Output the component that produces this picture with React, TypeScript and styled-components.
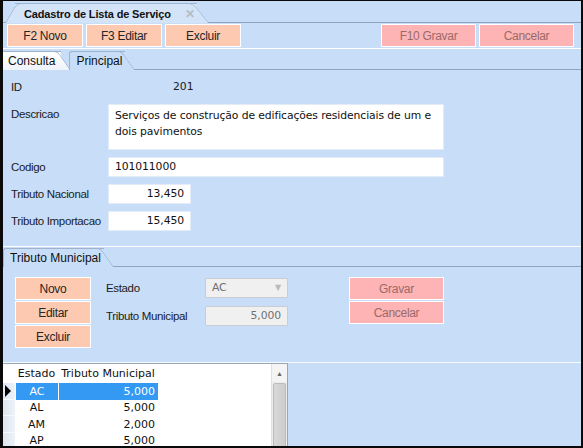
import React from 'react'
import styled, { createGlobalStyle } from 'styled-components'

const GlobalStyle = createGlobalStyle`
  html, body {
    margin: 0;
    padding: 0;
    background: #000;
  }
  * {
    box-sizing: border-box;
  }
`

const Window = styled.div`
  width: 583px;
  height: 448px;
  border-style: solid;
  border-color: #0a0a0a;
  border-width: 1px 2px 2px 3px;
  background: #c7ddf8;
  font-family: 'Liberation Sans', Arial, sans-serif;
  font-size: 12px;
  color: #1b1b1b;
  display: flex;
  flex-direction: column;
  overflow: hidden;
`

const DocStrip = styled.div`
  height: 22px;
  flex-shrink: 0;
  display: flex;
  align-items: flex-end;
  padding-left: 12px;
  border-bottom: 1px solid #8fa3bd;
`

const DocTab = styled.div`
  position: relative;
  height: 20px;
  padding: 0 2px 0 9px;
  display: flex;
  align-items: center;
  gap: 14px;
  background: #d3e3f8;
  border-top: 1px solid #9fb2cb;
  margin-bottom: -1px;
  font-weight: bold;
  font-size: 11px;
  letter-spacing: -0.15px;
  color: #111;

  &::before,
  &::after {
    content: '';
    position: absolute;
    top: -1px;
    bottom: 0;
    width: 14px;
    background: #d3e3f8;
    border-top: 1px solid #9fb2cb;
  }
  &::before {
    left: -10px;
    border-left: 1px solid #9fb2cb;
    border-top-left-radius: 6px;
    transform: skewX(-30deg);
    transform-origin: bottom left;
  }
  &::after {
    right: -12px;
    border-right: 1px solid #9fb2cb;
    border-top-right-radius: 6px;
    transform: skewX(38deg);
    transform-origin: bottom right;
  }
`

const DocTabText = styled.span`
  position: relative;
  z-index: 1;
`

const CloseMark = styled.span`
  position: relative;
  z-index: 1;
  color: #b4bcc8;
  font-size: 12px;
  font-weight: bold;
`

const Toolbar = styled.div`
  height: 26px;
  flex-shrink: 0;
  display: flex;
  align-items: center;
  padding: 0 7px 0 4px;
  gap: 3px;
  border-bottom: 1px solid #ffffff;
`

const Spacer = styled.div`
  flex: 1;
`

const ActionButton = styled.div<{ $tone?: 'peach' | 'pink'; $w: number; $h?: number }>`
  width: ${p => p.$w}px;
  height: ${p => p.$h ?? 23}px;
  display: flex;
  align-items: center;
  justify-content: center;
  border: 1px solid #ffffff;
  background: ${p => (p.$tone === 'pink' ? '#feb4b4' : '#fdcab1')};
  color: ${p => (p.$tone === 'pink' ? '#9a6a6a' : '#262626')};
  font-size: 12px;
  letter-spacing: -0.3px;
`

const TabRow = styled.div`
  height: 21px;
  flex-shrink: 0;
  display: flex;
  align-items: flex-end;
  gap: 8px;
  border-bottom: 1px solid #8fa3bd;
`

const PageTab = styled.div<{ $active?: boolean }>`
  position: relative;
  height: 19px;
  padding: 0 ${p => (p.$active ? 6 : 3)}px 0 ${p => (p.$active ? 5 : 6)}px;
  display: flex;
  align-items: center;
  margin-bottom: -1px;
  font-size: 12px;
  color: #111;
  background: ${p => (p.$active ? 'linear-gradient(#ffffff, #eef3fa)' : '#c7ddf8')};
  border-top: 1px solid #9fb2cb;
  border-left: ${p => (p.$active ? 'none' : '1px solid #9fb2cb')};
  ${p => (p.$active ? '' : 'border-top-left-radius: 3px;')}

  &::after {
    content: '';
    position: absolute;
    top: -1px;
    bottom: 0;
    right: -10px;
    width: 14px;
    background: inherit;
    border-top: 1px solid #9fb2cb;
    border-right: 1px solid #9fb2cb;
    border-top-right-radius: 4px;
    transform: skewX(35deg);
    transform-origin: bottom right;
  }
`

const TabLabel = styled.span`
  position: relative;
  z-index: 1;
`

const Form = styled.div`
  height: 177px;
  flex-shrink: 0;
  display: grid;
  grid-template-columns: 97px 1fr;
  grid-auto-rows: min-content;
  row-gap: 7px;
  padding: 7px 0 0 8px;
  border-bottom: 1px solid #ffffff;
`

const Label = styled.div<{ $top?: boolean }>`
  display: flex;
  align-items: ${p => (p.$top ? 'flex-start' : 'center')};
  padding-top: ${p => (p.$top ? 4 : 0)}px;
  min-height: 20px;
  font-size: 11.5px;
  letter-spacing: -0.35px;
`

const Plain = styled.div`
  height: 18px;
  display: flex;
  align-items: center;
  padding-left: 65px;
  font-family: 'DejaVu Sans', sans-serif;
  font-size: 10.8px;
`

const Field = styled.div<{ $w: number; $h?: number; $right?: boolean; $disabled?: boolean }>`
  width: ${p => p.$w}px;
  height: ${p => p.$h ?? 20}px;
  background: ${p => (p.$disabled ? '#f0f0f0' : '#ffffff')};
  border: 1px solid ${p => (p.$disabled ? '#c9cdd3' : '#e3ecf7')};
  border-radius: 1px;
  display: flex;
  align-items: ${p => (p.$h ? 'flex-start' : 'center')};
  justify-content: ${p => (p.$right ? 'flex-end' : 'flex-start')};
  padding: ${p => (p.$h ? '3px 6px' : '0 6px')};
  font-family: 'DejaVu Sans', sans-serif;
  font-size: 10.8px;
  letter-spacing: -0.1px;
  line-height: 16px;
  color: ${p => (p.$disabled ? '#707070' : '#111')};
`

const SectionHeader = styled.div`
  height: 20px;
  flex-shrink: 0;
  display: flex;
  align-items: flex-end;
  border-bottom: 1px solid #8fa3bd;
`

const SectionBody = styled.div`
  height: 96px;
  flex-shrink: 0;
  display: flex;
  padding: 10px 0 0 12px;
  border-bottom: 1px solid #f6fbff;
`

const ButtonStack = styled.div`
  display: flex;
  flex-direction: column;
  gap: 1px;
`

const MunicipalForm = styled.div`
  display: grid;
  grid-template-columns: 99px 83px;
  grid-auto-rows: 22px;
  row-gap: 6px;
  margin-left: 15px;
  align-items: center;
`

const SelectArrow = styled.span`
  margin-left: auto;
  color: #b9b9b9;
  font-size: 8px;
`

const SaveStack = styled(ButtonStack)`
  margin-left: 61px;
`

const GridArea = styled.div`
  flex: 1;
  display: flex;
`

const DataGrid = styled.div`
  width: 285px;
  display: flex;
  background: #ffffff;
  border-top: 1px solid #9aa6b4;
  border-right: 1px solid #9aa6b4;
`

const GridTable = styled.div`
  flex: 1;
  display: flex;
  flex-direction: column;
  font-family: 'DejaVu Sans', sans-serif;
  font-size: 11px;
`

const GridRow = styled.div`
  display: grid;
  grid-template-columns: 12px 43px 100px;
  height: 16.5px;
`

const HeaderRow = styled(GridRow)`
  height: 19px;
`

const Cell = styled.div<{ $align?: 'center' | 'right'; $selected?: boolean; $indicator?: boolean; $header?: boolean }>`
  display: flex;
  align-items: center;
  justify-content: ${p => (p.$align === 'right' ? 'flex-end' : 'center')};
  padding-right: ${p => (p.$align === 'right' ? 3 : 0)}px;
  background: ${p =>
    p.$indicator
      ? p.$header
        ? '#ffffff'
        : 'linear-gradient(90deg, #dde6f2, #eef2f8)'
      : p.$selected
        ? '#3399f3'
        : '#ffffff'};
  color: ${p => (p.$selected ? '#ffffff' : '#111')};
  border-left: ${p => (p.$selected && !p.$indicator ? '1px solid #ffffff' : 'none')};
  border-bottom: ${p => (p.$indicator && !p.$header ? '1px solid #f6f8fb' : 'none')};
`

const Pointer = styled.span`
  width: 0;
  height: 0;
  border-top: 6px solid transparent;
  border-bottom: 6px solid transparent;
  border-left: 6px solid #000;
  margin-right: 3px;
`

const ScrollBar = styled.div`
  width: 16px;
  display: flex;
  flex-direction: column;
  background: #ececec;
  border-left: 1px solid #e0e0e0;
`

const ScrollButton = styled.div`
  height: 18px;
  display: flex;
  align-items: center;
  justify-content: center;
  background: #f4f4f4;
  color: #666;
  font-size: 7px;
`

const ScrollThumb = styled.div`
  flex: 1;
  margin: 1px 1px 0;
  background: linear-gradient(90deg, #d8d8d8, #cdcdcd);
  border: 1px solid #bcbcbc;
  border-radius: 2px;
`

const rows = [
  { uf: 'AC', value: '5,000', selected: true },
  { uf: 'AL', value: '5,000' },
  { uf: 'AM', value: '2,000' },
  { uf: 'AP', value: '5,000' },
]

const App: React.FC = () => {
  return (
    <>
      <GlobalStyle />
      <Window>
        <DocStrip>
          <DocTab>
            <DocTabText>Cadastro de Lista de Serviço</DocTabText>
            <CloseMark>✕</CloseMark>
          </DocTab>
        </DocStrip>

        <Toolbar>
          <ActionButton $w={76}>F2 Novo</ActionButton>
          <ActionButton $w={76}>F3 Editar</ActionButton>
          <ActionButton $w={76}>Excluir</ActionButton>
          <Spacer />
          <ActionButton $w={95} $tone="pink">F10 Gravar</ActionButton>
          <ActionButton $w={95} $tone="pink">Cancelar</ActionButton>
        </Toolbar>

        <TabRow>
          <PageTab $active>
            <TabLabel>Consulta</TabLabel>
          </PageTab>
          <PageTab>
            <TabLabel>Principal</TabLabel>
          </PageTab>
        </TabRow>

        <Form>
          <Label>ID</Label>
          <Plain>201</Plain>
          <Label $top>Descricao</Label>
          <Field $w={336} $h={46}>
            Serviços de construção de edificações residenciais de um e dois pavimentos
          </Field>
          <Label>Codigo</Label>
          <Field $w={336}>101011000</Field>
          <Label>Tributo Nacional</Label>
          <Field $w={83} $right>13,450</Field>
          <Label>Tributo Importacao</Label>
          <Field $w={83} $right>15,450</Field>
        </Form>

        <SectionHeader>
          <PageTab>
            <TabLabel>Tributo Municipal</TabLabel>
          </PageTab>
        </SectionHeader>

        <SectionBody>
          <ButtonStack>
            <ActionButton $w={76}>Novo</ActionButton>
            <ActionButton $w={76}>Editar</ActionButton>
            <ActionButton $w={76}>Excluir</ActionButton>
          </ButtonStack>
          <MunicipalForm>
            <Label>Estado</Label>
            <Field $w={83} $disabled>
              AC
              <SelectArrow>▼</SelectArrow>
            </Field>
            <Label>Tributo Municipal</Label>
            <Field $w={83} $disabled $right>5,000</Field>
          </MunicipalForm>
          <SaveStack>
            <ActionButton $w={95} $tone="pink">Gravar</ActionButton>
            <ActionButton $w={95} $tone="pink">Cancelar</ActionButton>
          </SaveStack>
        </SectionBody>

        <GridArea>
          <DataGrid>
            <GridTable>
              <HeaderRow>
                <Cell $indicator $header />
                <Cell>Estado</Cell>
                <Cell>Tributo Municipal</Cell>
              </HeaderRow>
              {rows.map(r => (
                <GridRow key={r.uf}>
                  <Cell $indicator>{r.selected && <Pointer />}</Cell>
                  <Cell $selected={r.selected}>{r.uf}</Cell>
                  <Cell $selected={r.selected} $align="right">{r.value}</Cell>
                </GridRow>
              ))}
            </GridTable>
            <ScrollBar>
              <ScrollButton>▲</ScrollButton>
              <ScrollThumb />
            </ScrollBar>
          </DataGrid>
        </GridArea>
      </Window>
    </>
  )
}

export default App
